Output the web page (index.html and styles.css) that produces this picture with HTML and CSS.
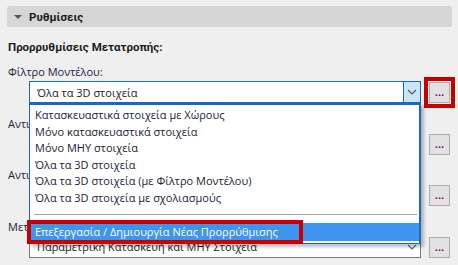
FILE: index.html
```html
<!DOCTYPE html>
<html lang="el">
<head>
  <meta charset="UTF-8" />
  <title>Ρυθμίσεις</title>
  <link rel="stylesheet" href="styles.css">
</head>
<body>

<div class="header">
  <span class="tri"></span>
  <span>Ρυθμίσεις</span>
</div>

<div class="content">
  <div class="title">Προρρυθμίσεις Μετατροπής:</div>

  <div class="field">
    <div class="label">Φίλτρο Μοντέλου:</div>
    <div class="row">
      <div class="combo open">
        <span class="value">Όλα τα 3D στοιχεία</span>
        <span class="arrow">
          <svg width="10" height="6" viewBox="0 0 10 6"><path d="M1 1l4 4 4-4" fill="none" stroke="#555" stroke-width="1.2"/></svg>
        </span>

        <!-- open list of the first combo -->
        <div class="dropdown">
          <div class="item">Κατασκευαστικά στοιχεία με Χώρους</div>
          <div class="item">Μόνο κατασκευαστικά στοιχεία</div>
          <div class="item">Μόνο ΜΗΥ στοιχεία</div>
          <div class="item">Όλα τα 3D στοιχεία</div>
          <div class="item">Όλα τα 3D στοιχεία (με Φίλτρο Μοντέλου)</div>
          <div class="item">Όλα τα 3D στοιχεία με σχολιασμούς</div>
          <div class="sep"></div>
          <div class="item selected">
            Επεξεργασία / Δημιουργία Νέας Προρρύθμισης
            <span class="mark-item"></span>
          </div>
        </div>
      </div>
      <button class="more marked">...</button>
    </div>
  </div>

  <div class="field">
    <div class="label">Αντιστοίχιση Τύπων:</div>
    <div class="row">
      <div class="combo"><span class="value">Προεπιλογή</span><span class="arrow"></span></div>
      <button class="more">...</button>
    </div>
  </div>

  <div class="field">
    <div class="label">Αντιστοίχιση Ιδιοτήτων:</div>
    <div class="row">
      <div class="combo"><span class="value">Προεπιλογή</span><span class="arrow"></span></div>
      <button class="more">...</button>
    </div>
  </div>

  <div class="field">
    <div class="label">Μετατροπή Γεωμετρίας:</div>
    <div class="row">
      <div class="combo">
        <span class="value">Παραμετρική Κατασκευή και ΜΗΥ Στοιχεία</span>
        <span class="arrow plain">
          <svg width="10" height="6" viewBox="0 0 10 6"><path d="M1 1l4 4 4-4" fill="none" stroke="#666" stroke-width="1.2"/></svg>
        </span>
      </div>
      <button class="more">...</button>
    </div>
  </div>
</div>

</body>
</html>
```

FILE: styles.css
```css
* {
  margin: 0;
  padding: 0;
  box-sizing: border-box;
}

body {
  background: #efefef;
  font-family: 'Open Sans', 'Noto Sans', sans-serif;
  font-size: 11px;
  color: #1c1c1c;
  overflow: hidden;
}

/* Section header */
.header {
  margin: 6px 6px 0 7px;
  height: 21px;
  background: #d6d6d6;
  border-radius: 3px;
  display: flex;
  align-items: center;
  gap: 7px;
  padding-left: 7px;
  font-family: Roboto, sans-serif;
  font-weight: 700;
  font-size: 11.5px;
}

.tri {
  width: 0;
  height: 0;
  border-left: 4px solid transparent;
  border-right: 4px solid transparent;
  border-top: 4px solid #555;
}

.content {
  padding: 12px 0 0 8px;
}

.title {
  font-family: Roboto, sans-serif;
  font-weight: 700;
  font-size: 11.5px;
  line-height: 16px;
  margin-bottom: 9px;
}

/* Fields */
.field {
  margin-bottom: 12.5px;
}

.label {
  line-height: 16px;
  height: 17px;
  color: #24203a;
}

.row {
  display: flex;
  align-items: flex-start;
  gap: 8px;
  padding-left: 21px;
}

.combo {
  position: relative;
  width: 392px;
  height: 22px;
  border: 1px solid #7a7a7a;
  background: #fff;
  display: flex;
  align-items: center;
}

.combo.open {
  border-color: #1769c4;
}

.value {
  flex: 1;
  padding-left: 7px;
  white-space: nowrap;
  overflow: hidden;
}

.arrow {
  width: 17px;
  height: 20px;
  display: flex;
  align-items: center;
  justify-content: center;
}

.open .arrow {
  background: #cce4f7;
  border-left: 1px solid #1769c4;
}

.more {
  margin-top: 1px;
  width: 21px;
  height: 21px;
  background: #e1e1e1;
  border: 1px solid #adadad;
  color: #800080;
  font-family: Roboto, sans-serif;
  font-size: 11px;
  line-height: 17px;
  font-weight: 700;
}

.more.marked {
  outline: 4px solid #c40000;
  outline-offset: 1px;
}

/* Open list */
.dropdown {
  position: absolute;
  top: 21px;
  left: -1px;
  width: 392px;
  height: 141px;
  background: #fff;
  border: 1px solid #1769c4;
  border-top-width: 2px;
  border-right-width: 2px;
  box-shadow: 3px 3px 3px rgba(0, 0, 0, 0.25);
  padding-top: 2px;
  z-index: 5;
}

.item {
  position: relative;
  height: 16.5px;
  line-height: 16.5px;
  padding-left: 5px;
  white-space: nowrap;
  color: #201c3a;
}

.sep {
  height: 1px;
  background: #a0a0a0;
  margin: 8px 2px 8px 4px;
}

.item.selected {
  height: 18px;
  line-height: 18px;
  background: #3d95f0;
  color: #fff;
}

.mark-item {
  position: absolute;
  left: -3px;
  top: -3px;
  width: 276px;
  height: 24px;
  border: 4px solid #c40000;
}
```
